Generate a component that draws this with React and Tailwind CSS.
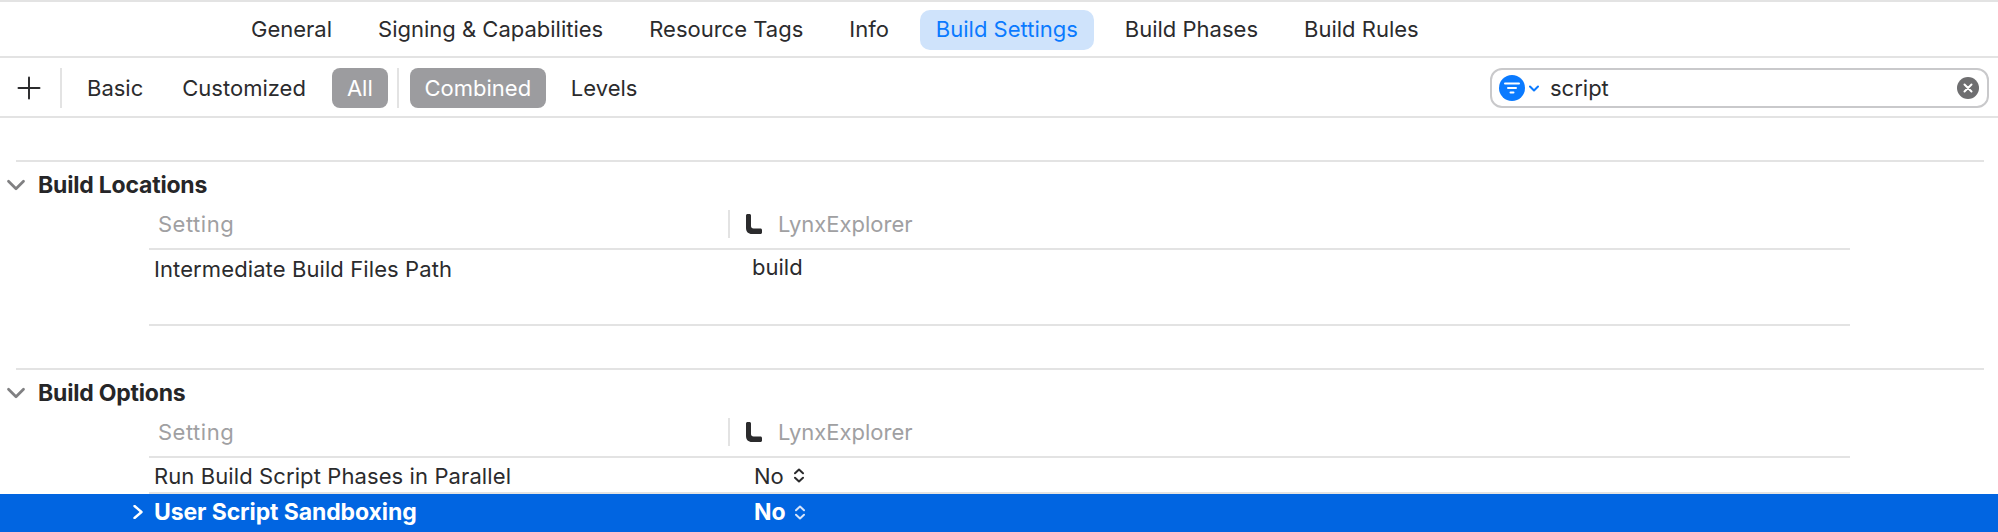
import { Plus, ChevronDown } from 'lucide-react';

const font = "font-['Inter','Liberation_Sans',sans-serif]";
const tabs = ['General', 'Signing & Capabilities', 'Resource Tags', 'Info', 'Build Settings', 'Build Phases', 'Build Rules'];

function TargetIcon() {
  return (
    <svg width="16" height="20" viewBox="0 0 16 20" className="shrink-0">
      <path d="M0 1.5C0 .7.7 0 1.5 0h2C4.3 0 5 .7 5 1.5V12c0 1.6.9 2.5 2.5 2.5h7c.8 0 1.5.7 1.5 1.5v2.5c0 .8-.7 1.5-1.5 1.5H6c-3.7 0-6-2.3-6-6z" fill="#2b2b2d" />
    </svg>
  );
}

function UpDownIcon({ className, width = 2 }) {
  return (
    <svg width="10" height="15" viewBox="0 0 10 15" fill="none" stroke="currentColor" strokeWidth={width} strokeLinecap="round" strokeLinejoin="round" className={className}>
      <path d="M1 5.2 5 1.5l4 3.7M1 9.8l4 3.7 4-3.7" />
    </svg>
  );
}

function SectionHeader({ title }) {
  return (
    <div>
      <div className="ml-4 mr-3.5 h-0.5 bg-[#e3e3e3]" />
      <div className="flex h-12 items-center pb-0.5">
        <ChevronDown size={30} strokeWidth={2.2} className="ml-px text-[#808082]" />
        <span className="ml-[7px] text-[23px] font-bold tracking-[-0.2px] text-[#262628]">{title}</span>
      </div>
    </div>
  );
}

function ColumnHeader() {
  return (
    <div className="ml-[149px] mr-[148px] flex h-10 items-center border-b-2 border-[#e3e3e3] pb-2.5">
      <span className="w-[579px] pl-[9px] tracking-[0.5px] text-[#a0a0a2]">Setting</span>
      <div className="h-7 w-0.5 bg-[#e3e3e3]" />
      <div className="ml-4 flex items-center gap-4 text-[#a0a0a2]">
        <TargetIcon />
        <span>LynxExplorer</span>
      </div>
    </div>
  );
}

export default function App() {
  return (
    <div className={`${font} h-[532px] w-[1998px] overflow-hidden bg-white text-[22px] leading-7 text-[#2b2b2d]`}>
      <div className="flex h-[58px] items-center gap-4 border-y-2 border-[#e3e3e3] pl-[236px] pt-0.5">
        {tabs.map((tab) => (
          <span
            key={tab}
            className={`flex h-10 items-center rounded-[10px] pb-0.5 ${tab === 'Build Settings' ? 'bg-[#cfe3fb] px-4 text-[#0a7aff]' : 'px-[15px]'}`}
          >
            {tab}
          </span>
        ))}
      </div>

      <div className="flex h-[60px] items-center border-b-2 border-[#e3e3e3] pt-0.5">
        <Plus size={36} strokeWidth={1.3} className="ml-[11px]" />
        <div className="ml-[13px] h-10 w-0.5 bg-[#e3e3e3]" />
        <span className="ml-[25px]">Basic</span>
        <span className="ml-[39px]">Customized</span>
        <span className="ml-[26px] flex h-10 w-14 items-center justify-center rounded-lg bg-[#9c9c9f] text-white">All</span>
        <div className="ml-[9px] h-10 w-0.5 bg-[#e3e3e3]" />
        <span className="ml-[11px] flex h-10 w-[136px] items-center justify-center rounded-lg bg-[#9c9c9f] text-white">Combined</span>
        <span className="ml-[25px]">Levels</span>

        <div className="ml-auto mr-[9px] flex h-10 w-[499px] items-center rounded-xl border-2 border-[#c9c9cb] pr-2">
          <div className="ml-[7px] flex h-[26px] w-[26px] items-center justify-center rounded-full bg-[#0a7aff]">
            <svg width="16" height="12" viewBox="0 0 16 12" fill="none" stroke="white" strokeWidth="2" strokeLinecap="round">
              <path d="M1 1.5h14M4 6h8M6.5 10.5h3" />
            </svg>
          </div>
          <svg width="10" height="7" viewBox="0 0 10 7" fill="none" stroke="#0a7aff" strokeWidth="2" strokeLinecap="round" strokeLinejoin="round" className="ml-1">
            <path d="M1 1.5 5 5.5l4-4" />
          </svg>
          <span className="ml-[11px]">script</span>
          <div className="ml-auto flex h-[22px] w-[22px] items-center justify-center rounded-full bg-[#6e6e70]">
            <svg width="10" height="10" viewBox="0 0 10 10" stroke="white" strokeWidth="2" strokeLinecap="round">
              <path d="M1.5 1.5l7 7M8.5 1.5l-7 7" />
            </svg>
          </div>
        </div>
      </div>

      <div className="pt-[42px]">
        <SectionHeader title="Build Locations" />
        <ColumnHeader />
        <div className="ml-[149px] mr-[148px] h-[76px] border-b-2 border-[#e3e3e3]">
          <div className="flex pt-[5px]">
            <span className="w-[603px] pl-[5px] tracking-[0.1px]">Intermediate Build Files Path</span>
            <span className="-mt-0.5">build</span>
          </div>
        </div>
      </div>

      <div className="pt-[42px]">
        <SectionHeader title="Build Options" />
        <ColumnHeader />
        <div className="ml-[149px] mr-[148px] flex h-9 items-center border-b-2 border-[#e3e3e3] pt-px">
          <span className="w-[605px] pl-[5px] tracking-[0.1px]">Run Build Script Phases in Parallel</span>
          <span>No</span>
          <UpDownIcon className="ml-2.5" />
        </div>
        <div className="flex h-[38px] items-center bg-[#0165e1] pb-0.5 font-bold text-white">
          <svg width="10" height="14" viewBox="0 0 10 14" fill="none" stroke="currentColor" strokeWidth="2.4" strokeLinecap="round" strokeLinejoin="round" className="ml-[133px]">
            <path d="M1.5 1 8.5 7l-7 6" />
          </svg>
          <span className="ml-[11px] w-[600px] text-[23px] tracking-[-0.1px]">User Script Sandboxing</span>
          <span className="text-[23px]">No</span>
          <UpDownIcon className="ml-[9px] text-[#d6e4fa]" />
        </div>
      </div>
    </div>
  );
}
